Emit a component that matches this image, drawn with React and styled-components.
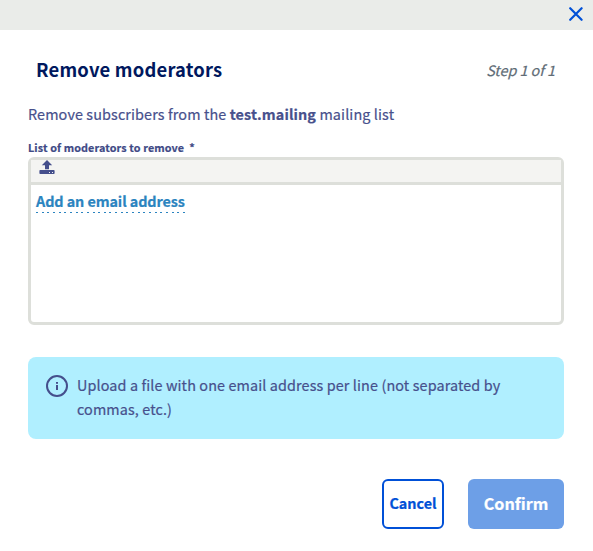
import React from "react";
import styled, { createGlobalStyle } from "styled-components";

const GlobalStyle = createGlobalStyle`
  * { box-sizing: border-box; }
  body {
    margin: 0;
    background: #fff;
    color: #47508c;
    font-family: "Noto Sans CJK JP", "Noto Sans", sans-serif;
    font-size: 14.4px;
    line-height: 24px;
    letter-spacing: 0.11px;
    -webkit-text-stroke: 0.2px currentColor;
    -webkit-font-smoothing: antialiased;
  }
`;

const Dialog = styled.section`
  width: 593px;
  height: 551px;
  display: flex;
  flex-direction: column;
  overflow: hidden;
`;

const TopBar = styled.header`
  height: 30px;
  flex: none;
  display: flex;
  justify-content: flex-end;
  padding: 7px 10px 0 0;
  background: #eaece9;
`;

const CloseButton = styled.button`
  width: 14px;
  height: 14px;
  padding: 0;
  border: 0;
  background: none;
  color: #0050d7;
  svg { display: block; }
`;

const Body = styled.div`
  display: flex;
  flex-direction: column;
  padding: 23px 29px 0 28px;
`;

const Heading = styled.div`
  display: flex;
  justify-content: space-between;
  height: 32px;
  padding: 0 8px;
  line-height: 32px;
`;

const Title = styled.h1`
  margin: 0;
  color: #00185e;
  font-size: 18.4px;
  font-weight: 700;
  letter-spacing: 0.2px;
  -webkit-text-stroke: 0;
`;

const Step = styled.span`
  color: #5f6c76;
  font-style: italic;
  line-height: 34px;
  letter-spacing: -0.05px;
  margin-right: 1px;
`;

const Intro = styled.p`
  margin: 17px 0 0;
  white-space: nowrap;
`;

const Label = styled.label`
  margin-top: 13px;
  height: 16px;
  color: #3f4a86;
  font-size: 10.8px;
  font-weight: 700;
  line-height: 16px;
  white-space: pre;
`;

const AddressBox = styled.div`
  margin-top: 2px;
  width: 536px;
  height: 168px;
  border: 3px solid #dddfda;
  border-radius: 6px;
`;

const Toolbar = styled.div`
  height: 25px;
  padding: 0 8px;
  border-bottom: 3px solid #dddfda;
  background: #f4f4f2;
  svg { display: block; }
`;

const AddLink = styled.a`
  display: block;
  width: 149px;
  height: 24px;
  margin: 4px 0 0 5px;
  color: #2b84c0;
  font-weight: 700;
  letter-spacing: -0.09px;
  white-space: nowrap;
  background: repeating-linear-gradient(90deg, #2b84c0 0 2px, transparent 2px 5.65px) 0 100% / 100% 1px no-repeat;
`;

const Notice = styled.div`
  display: flex;
  gap: 9px;
  width: 536px;
  height: 82px;
  margin-top: 32px;
  padding: 16px 18px;
  border-radius: 8px;
  background: #b0efff;
  svg { flex: none; margin-top: 2px; }
`;

const NoticeText = styled.p`
  margin: 0;
  width: 440px;
`;

const Actions = styled.footer`
  display: flex;
  justify-content: flex-end;
  gap: 24px;
  margin-top: 40px;
`;

const Button = styled.button`
  width: ${(p) => (p.$primary ? 96 : 62)}px;
  height: 50px;
  padding: 0 0 2px;
  border: ${(p) => (p.$primary ? "0" : "2px solid #0050d7")};
  border-radius: 6px;
  background: ${(p) => (p.$primary ? "#6d9fe7" : "#fff")};
  color: ${(p) => (p.$primary ? "#fff" : "#0050d7")};
  font-family: inherit;
  font-size: ${(p) => (p.$primary ? 16.2 : 14.4)}px;
  font-weight: 700;
  letter-spacing: 0;
  line-height: 24px;
`;

const CloseIcon = () => (
  <svg width="14" height="14" viewBox="0 0 14 14" fill="none" stroke="currentColor" strokeWidth="2.2" strokeLinecap="round">
    <path d="M1.2 1.2 12.6 12.8M12.6 1.2 1.2 12.8" />
  </svg>
);

const UploadIcon = () => (
  <svg width="16" height="15" viewBox="0 0 16 15" fill="#454f8c">
    <path d="M8 0 13.2 5.3H10V9.3H6V5.3H2.8z" />
    <path fillRule="evenodd" d="M1.2 10H14.8Q15.6 10 15.6 10.8V13.3Q15.6 14 14.8 14H1.2Q.4 14 .4 13.3V10.8Q.4 10 1.2 10ZM10 12v1h1v-1ZM13 12v1H14v-1Z" />
  </svg>
);

const InfoIcon = () => (
  <svg width="22" height="22" viewBox="0 0 22 22" fill="#454f8c">
    <circle cx="11" cy="11" r="10" fill="none" stroke="#454f8c" strokeWidth="2" />
    <rect x="10" y="7" width="2" height="1.8" />
    <rect x="10" y="10" width="2" height="5" />
  </svg>
);

export default function App() {
  return (
    <>
      <GlobalStyle />
      <Dialog>
        <TopBar>
          <CloseButton aria-label="Close"><CloseIcon /></CloseButton>
        </TopBar>
        <Body>
          <Heading>
            <Title>Remove moderators</Title>
            <Step>Step 1 of 1</Step>
          </Heading>
          <Intro>Remove subscribers from the <b>test.mailing</b> mailing list</Intro>
          <Label>{"List of moderators to remove  *"}</Label>
          <AddressBox>
            <Toolbar><UploadIcon /></Toolbar>
            <AddLink>Add an email address</AddLink>
          </AddressBox>
          <Notice>
            <InfoIcon />
            <NoticeText>Upload a file with one email address per line (not separated by commas, etc.)</NoticeText>
          </Notice>
          <Actions>
            <Button>Cancel</Button>
            <Button $primary>Confirm</Button>
          </Actions>
        </Body>
      </Dialog>
    </>
  );
}
